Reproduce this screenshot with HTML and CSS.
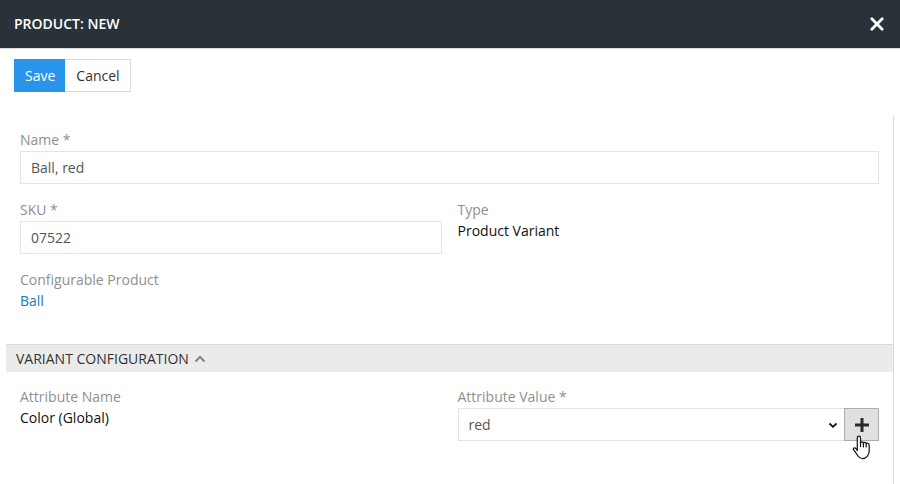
FILE: index.html
```html
<!DOCTYPE html>
<html lang="en">
<head>
<meta charset="utf-8">
<meta name="viewport" content="width=device-width, initial-scale=1">
<title>Product: New</title>
<link rel="stylesheet" href="styles.css">
</head>
<body>
<header class="titlebar">
  <h1 class="title">Product: New</h1>
  <button class="close" type="button" aria-label="Close">
    <svg width="16" height="16" viewBox="0 0 16 16" aria-hidden="true"><path d="M2.8 2.8 13.2 13.2M13.2 2.8 2.8 13.2" stroke="currentColor" stroke-width="2.8" stroke-linecap="round"/></svg>
  </button>
</header>
<form class="form">
  <div class="toolbar">
    <button class="btn btn-primary" type="button">Save</button>
    <button class="btn btn-default" type="button">Cancel</button>
  </div>
  <main class="panel">
    <section class="fields">
      <div class="field wide">
        <label class="label" for="name">Name *</label>
        <input class="control" id="name" type="text" value="Ball, red">
      </div>
      <div class="field">
        <label class="label" for="sku">SKU *</label>
        <input class="control" id="sku" type="text" value="07522">
      </div>
      <div class="field">
        <span class="label">Type</span>
        <span class="value">Product Variant</span>
      </div>
      <div class="field">
        <span class="label">Configurable Product</span>
        <a class="link" href="#">Ball</a>
      </div>
    </section>
    <h2 class="section-title">
      <span>Variant Configuration</span>
      <svg width="12" height="8" viewBox="0 0 12 8" aria-hidden="true"><path d="M1.5 6.5 6 2 10.5 6.5" fill="none" stroke="#858585" stroke-width="2"/></svg>
    </h2>
    <section class="fields">
      <div class="field">
        <span class="label">Attribute Name</span>
        <span class="value">Color (Global)</span>
      </div>
      <div class="field">
        <label class="label" for="attribute-value">Attribute Value *</label>
        <div class="input-group">
          <div class="select-wrap">
            <select class="control select" id="attribute-value"><option>red</option></select>
            <svg class="caret" width="10" height="7" viewBox="0 0 10 7" aria-hidden="true"><path d="M1.5 1.5 5 4.8 8.5 1.5" fill="none" stroke="#111" stroke-width="1.8"/></svg>
          </div>
          <button class="add" type="button" aria-label="Add value">
            <svg width="14" height="14" viewBox="0 0 14 14" aria-hidden="true"><path d="M7 0V14M0 7H14" stroke="#2b2b2b" stroke-width="3"/></svg>
            <svg class="pointer" width="19" height="25" viewBox="0 0 19 25" aria-hidden="true"><path d="M5.3 15.6V3Q5.3 1.2 6.9 1.2T8.5 3V8.2Q8.7 6.8 10 6.9T11.4 8.3Q11.8 7.2 13 7.4T14.2 8.8Q14.6 7.9 15.8 8.3T17.2 10.2V16Q17.2 18.4 16 20Q14 23.6 10.6 23.6Q7.6 23.6 6 21Q3.8 17.6 2.2 15.6Q1 14.4 1.4 13.4Q2.6 12.2 4.2 13.8Z" fill="#fff" stroke="#111" stroke-width="1.2" stroke-linejoin="round"/><path d="M8.5 7.5V11.5M11.4 8V12M14.2 8.8V12" stroke="#111" stroke-width="1.2" stroke-linecap="round"/></svg>
          </button>
        </div>
      </div>
    </section>
  </main>
</form>
</body>
</html>
```
FILE: styles.css
```css
* { box-sizing: border-box; }
body {
  margin: 0;
  min-height: 100vh;
  display: flex;
  flex-direction: column;
  background: #fff;
  color: #111;
  font: 14px/21px "Open Sans", sans-serif;
}
button, input, select { font: inherit; border-radius: 0; }
svg { display: block; }
.titlebar {
  display: flex;
  align-items: center;
  justify-content: space-between;
  height: 49px;
  padding: 0 15px 0 14px;
  background: #283238;
  border-bottom: 1px solid #dcdddd;
  color: #fff;
}
.title {
  margin: 0;
  font-size: 14px;
  line-height: 20px;
  font-weight: 600;
  text-transform: uppercase;
}
.close {
  padding: 0;
  border: 0;
  background: none;
  color: #fff;
}
.form {
  flex: 1;
  display: flex;
  flex-direction: column;
}
.toolbar {
  display: flex;
  padding: 10px 14px 24px;
}
.btn {
  height: 33px;
  padding: 0 10px 0 11px;
  border: 0;
}
.btn-primary { background: #2895ea; color: #fff; }
.btn-default {
  border: 1px solid #dadada;
  border-left: 0;
  background: #fff;
  color: #333;
}
.panel {
  flex: 1;
  margin: 0 6px;
  border-right: 1px solid #dadada;
}
.fields {
  display: grid;
  grid-template-columns: 1fr 1fr;
  gap: 15px 16px;
  padding: 13px 14px 33px;
}
.field {
  display: flex;
  flex-direction: column;
  align-items: flex-start;
  min-width: 0;
}
.wide { grid-column: 1 / -1; }
.label { color: #8f8f8f; }
.value { color: #111; }
.link { color: #2277bd; text-decoration: none; }
.control {
  width: 100%;
  height: 33px;
  padding: 0 10px;
  border: 1px solid #e4e4e4;
  background: #fff;
  color: #555;
}
.field > .control, .input-group { margin-top: 1px; }
.section-title {
  display: flex;
  align-items: center;
  gap: 5px;
  height: 28px;
  margin: 0 0 1px;
  padding: 0 10px;
  border-top: 1px solid #dadada;
  background: #ebebeb;
  color: #333;
  font-size: 14px;
  font-weight: 400;
  text-transform: uppercase;
}
.input-group { display: flex; width: 100%; }
.select-wrap { position: relative; flex: 1; }
.select { display: block; appearance: none; border-right: 0; }
.caret { position: absolute; right: 6px; top: 14px; pointer-events: none; }
.add {
  position: relative;
  display: grid;
  place-items: center;
  width: 35px;
  height: 33px;
  padding: 0;
  border: 1px solid #adadad;
  background: #e0e0e0;
}
.pointer { position: absolute; left: 7px; top: 26px; }
```
